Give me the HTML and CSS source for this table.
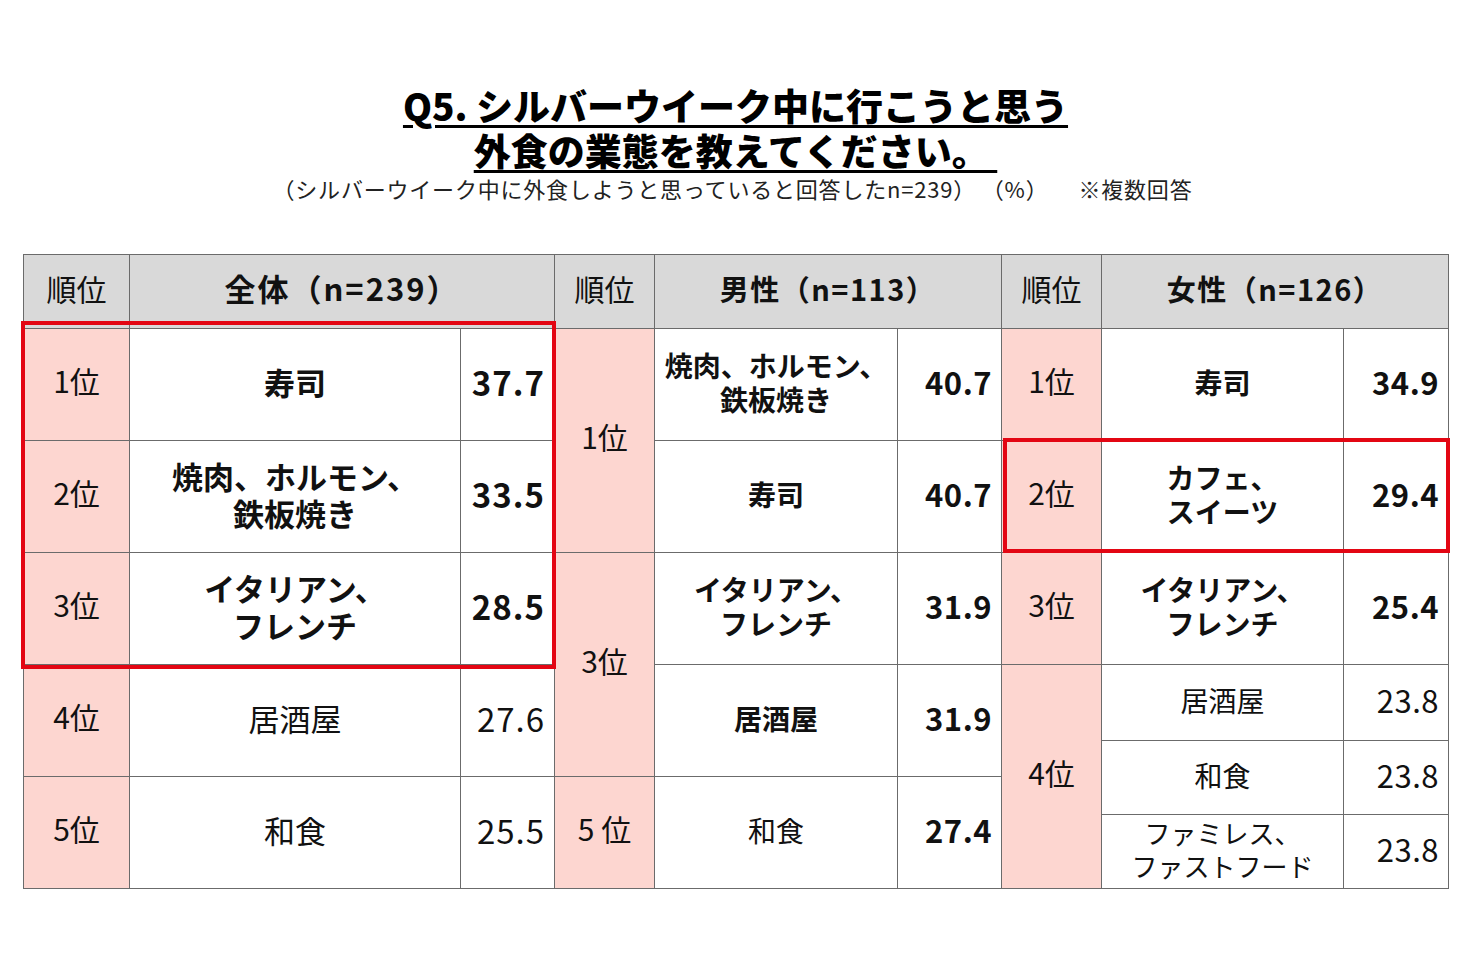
FILE: index.html
```html
<!DOCTYPE html>
<html lang="ja">
<head>
<meta charset="utf-8">
<title>Q5</title>
<link rel="stylesheet" href="styles.css">
</head>
<body>
<div class="page">
  <header class="heading">
    <h1 class="title"><span class="title-line">Q5. シルバーウイーク中に行こうと思う</span><br><span class="title-line">外食の業態を教えてください。 </span></h1>
    <p class="subtitle"><span>（シルバーウイーク中に外食しようと思っていると回答したn=239） （%）</span><span class="note">※複数回答</span></p>
  </header>
  <div class="table-wrap">
    <table class="rank-table">
      <colgroup>
        <col class="c-rank1"><col class="c-item1"><col class="c-val1">
        <col class="c-rank2"><col class="c-item2"><col class="c-val2">
        <col class="c-rank3"><col class="c-item3"><col class="c-val3">
      </colgroup>
      <tr class="r-head">
        <th class="rank-h">順位</th><th colspan="2" class="group-h big">全体（n=239）</th>
        <th class="rank-h">順位</th><th colspan="2" class="group-h">男性（n=113）</th>
        <th class="rank-h">順位</th><th colspan="2" class="group-h">女性（n=126）</th>
      </tr>
      <tr class="r-full">
        <td class="rank">1位</td><td class="item big b">寿司</td><td class="val big b">37.7</td>
        <td class="rank" rowspan="2">1位</td><td class="item b">焼肉、ホルモン、<br>鉄板焼き</td><td class="val b">40.7</td>
        <td class="rank">1位</td><td class="item b">寿司</td><td class="val b">34.9</td>
      </tr>
      <tr class="r-full">
        <td class="rank">2位</td><td class="item big b">焼肉、ホルモン、<br>鉄板焼き</td><td class="val big b">33.5</td>
        <td class="item b">寿司</td><td class="val b">40.7</td>
        <td class="rank">2位</td><td class="item b">カフェ、<br>スイーツ</td><td class="val b">29.4</td>
      </tr>
      <tr class="r-full">
        <td class="rank">3位</td><td class="item big b">イタリアン、<br>フレンチ</td><td class="val big b">28.5</td>
        <td class="rank" rowspan="3">3位</td><td class="item b">イタリアン、<br>フレンチ</td><td class="val b">31.9</td>
        <td class="rank">3位</td><td class="item b">イタリアン、<br>フレンチ</td><td class="val b">25.4</td>
      </tr>
      <tr class="r-4a">
        <td class="rank" rowspan="2">4位</td><td class="item big" rowspan="2">居酒屋</td><td class="val big" rowspan="2">27.6</td>
        <td class="item b" rowspan="2">居酒屋</td><td class="val b" rowspan="2">31.9</td>
        <td class="rank" rowspan="4">4位</td><td class="item">居酒屋</td><td class="val">23.8</td>
      </tr>
      <tr class="r-4b">
        <td class="item" rowspan="2">和食</td><td class="val" rowspan="2">23.8</td>
      </tr>
      <tr class="r-5a">
        <td class="rank" rowspan="2">5位</td><td class="item big" rowspan="2">和食</td><td class="val big" rowspan="2">25.5</td>
        <td class="rank" rowspan="2">5 位</td><td class="item" rowspan="2">和食</td><td class="val b" rowspan="2">27.4</td>
      </tr>
      <tr class="r-5b">
        <td class="item small">ファミレス、<br>ファストフード</td><td class="val">23.8</td>
      </tr>
    </table>
    <div class="highlight hl-total"></div>
    <div class="highlight hl-female"></div>
  </div>
</div>
</body>
</html>
```

FILE: styles.css
```css
html, body {
  margin: 0;
  padding: 0;
  background: #ffffff;
}
body {
  font-family: "Noto Sans CJK JP", "Noto Sans", sans-serif;
  color: #111111;
}
.page {
  width: 1470px;
  height: 980px;
  box-sizing: border-box;
  padding: 83px 22px 0 23px;
}
.heading {
  text-align: center;
}
.title {
  margin: 0;
  font-size: 37px;
  line-height: 45px;
  font-weight: 900;
  color: #000;
  letter-spacing: 0;
}
.title-line {
  text-decoration: underline;
  text-decoration-thickness: 3px;
  text-underline-offset: 4px;
  white-space: pre;
}
.subtitle {
  margin: 0;
  font-size: 22px;
  line-height: 30px;
  color: #222;
  letter-spacing: 0.8px;
  padding-right: 6px;
}
.subtitle .note {
  margin-left: 30px;
}
.table-wrap {
  position: relative;
  margin-top: 51px;
  width: 1425px;
}
.rank-table {
  border-collapse: collapse;
  table-layout: fixed;
  width: 1425px;
}
.c-rank1 { width: 106px; }
.c-item1 { width: 331px; }
.c-val1 { width: 94px; }
.c-rank2 { width: 100px; }
.c-item2 { width: 243px; }
.c-val2 { width: 104px; }
.c-rank3 { width: 100px; }
.c-item3 { width: 242px; }
.c-val3 { width: 105px; }
.rank-table th,
.rank-table td {
  border: 1px solid #6b6b6b;
  padding: 0 0 6px 0;
  vertical-align: middle;
}
.r-head { height: 74px; }
.r-full { height: 112px; }
.r-4a { height: 76px; }
.r-4b { height: 36px; }
.r-5a { height: 38px; }
.r-5b { height: 74px; }
.rank-table th {
  background: #d9d9d9;
  font-size: 29px;
  font-weight: 700;
  text-align: center;
  letter-spacing: 1.5px;
  padding-bottom: 8px;
}
.rank-table th.rank-h {
  font-weight: 400;
  font-size: 30px;
  letter-spacing: 0;
}
.rank-table th.group-h.big {
  font-size: 31px;
  letter-spacing: 2px;
}
.rank-table td.rank {
  background: #fdd6d0;
  text-align: center;
  font-size: 30px;
  font-weight: 400;
  padding-bottom: 10px;
}
.item {
  text-align: center;
  font-size: 28px;
  line-height: 34px;
  font-weight: 400;
}
.item.big {
  font-size: 31px;
  line-height: 37px;
}
.item.small {
  font-size: 26px;
  line-height: 33px;
}
.rank-table td.val {
  text-align: right;
  padding-right: 9px;
  font-size: 31px;
  font-weight: 400;
  letter-spacing: 0.5px;
}
.rank-table td.val.big {
  font-size: 33px;
  letter-spacing: 1px;
}
.rank-table td.b {
  font-weight: 700;
}
.highlight {
  position: absolute;
  border: 4px solid #e30613;
  box-sizing: border-box;
  pointer-events: none;
}
.hl-total {
  left: -2px;
  top: 67px;
  width: 535px;
  height: 348px;
}
.hl-female {
  left: 980px;
  top: 184px;
  width: 447px;
  height: 115px;
}
```
